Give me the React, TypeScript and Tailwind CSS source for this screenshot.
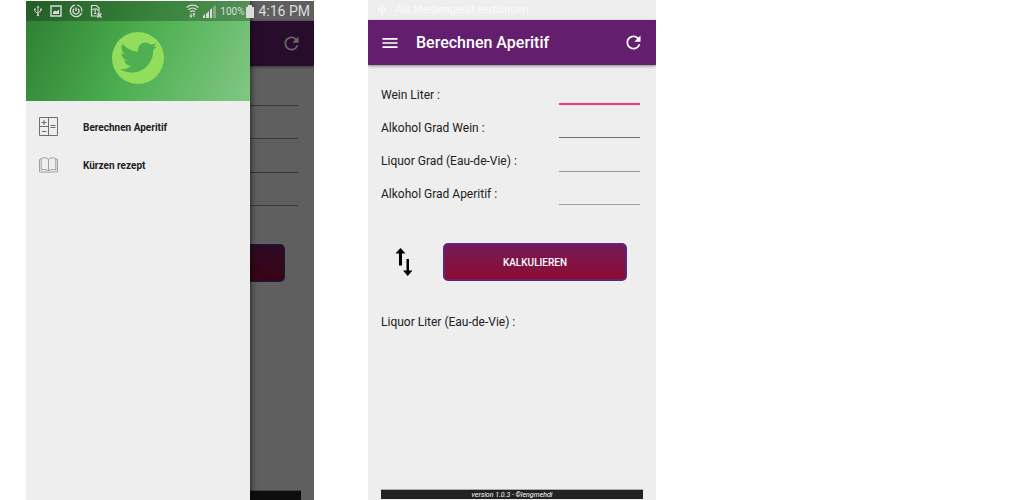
import React from "react";
import { FaTwitter } from "react-icons/fa";
import { MdRefresh, MdMenu } from "react-icons/md";

const fields = [
  { id: "wine", label: "Wein Liter :", line: "border-b-2 border-[#ff3377]" },
  { id: "wine-grade", label: "Alkohol Grad Wein :", line: "border-b border-[#6f6f6f]" },
  { id: "liquor-grade", label: "Liquor Grad (Eau-de-Vie) :", line: "border-b border-[#9a9a9a]" },
  { id: "aperitif-grade", label: "Alkohol Grad Aperitif :", line: "border-b border-[#9f9f9f]" },
];

function UsbIcon({ className }: { className: string }) {
  return (
    <svg viewBox="0 0 10 12" className={className} fill="none" stroke="currentColor" aria-hidden="true">
      <path d="M5 2v8M2 4.5v2L5 8.5M8 4v2L5 7.8" strokeWidth=".9" />
      <path d="M5 .5 3.600 2.600h2.800zM1.200 3.500h1.600v1.600H1.200zM7.200 3.500h1.600v1.600H7.200z" fill="currentColor" stroke="none" />
      <circle cx="5" cy="10.2" r="1.100" fill="currentColor" stroke="none" />
    </svg>
  );
}

function SwapIcon() {
  return (
    <svg viewBox="0 0 18 30" className="h-[30px] w-[18px]" aria-hidden="true">
      <path d="M5.500 1 10.500 6.500H7V18.500H4V6.500H.5zM11.500 12h2.500v11.500h3.500L12.700 29 8 23.500h3.500z" fill="#000" />
    </svg>
  );
}

function PictureIcon() {
  return (
    <svg viewBox="0 0 12 12" className="size-3" aria-hidden="true">
      <path d="M1 1h10v10H1z" fill="none" stroke="currentColor" strokeWidth="1.4" />
      <path d="M3 9V7l2-1.500 1.500 1L9 4.500V9z" fill="currentColor" />
    </svg>
  );
}

function PowerRingIcon() {
  return (
    <svg viewBox="0 0 14 14" className="size-[14px]" fill="none" stroke="currentColor" aria-hidden="true">
      <path d="M5.800 1.200A5.800 5.800 0 1 0 12.500 9M8.200 1.200A5.800 5.800 0 0 1 12.800 7.500" strokeWidth="1.300" />
      <path d="M5 4.800a3 3 0 1 0 4 0M7 3.500v3.500" strokeWidth="1.400" />
    </svg>
  );
}

function SimIcon() {
  return (
    <svg viewBox="0 0 12 14" className="h-[14px] w-3" aria-hidden="true">
      <path d="M1.500 1.500h5l2.500 2.500v8h-7.500z" fill="none" stroke="currentColor" strokeWidth="1.200" />
      <path d="M3 5h4.500M5.200 5v4.500M4 9.500h2.500M3 5v1.500M7.500 5v1.500" stroke="currentColor" fill="none" />
      <path d="m7.500 9.500 4 4m0-4-4 4" stroke="currentColor" strokeWidth="1.300" />
    </svg>
  );
}

function WifiIcon() {
  return (
    <svg viewBox="0 0 13 14" className="h-[14px] w-[13px]" fill="none" stroke="currentColor" aria-hidden="true">
      <path d="M.7 3.500a8.500 8.500 0 0 1 11.600 0M2.500 5.700a6 6 0 0 1 8 0M4.300 7.800a3.400 3.400 0 0 1 4.400 0" strokeWidth="1.300" />
      <path d="M5 9.500v4M8 9v4" />
      <path d="m3.300 11.500 1.700 2.300 1.700-2.300zM6.500 10.800 8 8.800l1.500 2z" fill="currentColor" stroke="none" />
    </svg>
  );
}

function SignalIcon() {
  return (
    <svg viewBox="0 0 13 13" className="size-[13px]" fill="currentColor" aria-hidden="true">
      <path d="M0 13v-2l2-2v4zM3 13V9l3-3v7zM7 13V5l2-2v10z" />
      <path d="M10 13V2l3-2v13z" opacity=".4" />
    </svg>
  );
}

function BatteryIcon() {
  return (
    <svg viewBox="0 0 8 13" className="h-[13px] w-2" fill="currentColor" aria-hidden="true">
      <path d="M2 0h4v2h2v11H0V2h2z" />
    </svg>
  );
}

function CalculatorIcon() {
  return (
    <svg viewBox="0 0 20 20" className="size-5" fill="none" stroke="#6d6d6d" aria-hidden="true">
      <path d="M.5.5h18v18H.5zM9.500.5v18M.5 9.500h9M11.500 8.500h5M11.500 10.500h5M3 14.500h4.500M2.500 5.500h5M5 3v5" />
    </svg>
  );
}

function BookIcon() {
  return (
    <svg viewBox="0 0 20 16" className="h-4 w-5" fill="none" stroke="#8b8b8b" aria-hidden="true">
      <path d="M9.500 2.500C8 .5 4.500.2 2.500 1.500L.5 2.500v12.500H8l1.500.8 1.500-.8h7.500V2.500l-2-1C14.500.2 11 .5 9.500 2.500zM9.500 2.500V14M2.200 1.800v11.200c2.300-.8 5.800-.6 7.300 1 1.500-1.600 5-1.800 7.300-1V1.800" strokeWidth=".8" />
    </svg>
  );
}

function Calculator({ covered = false }: { covered?: boolean }) {
  return (
    <div inert={covered} className="flex flex-1 flex-col bg-[#eeeeee] text-[#212121]">
      <div className="flex h-5 items-center gap-2 pl-[9px] text-[11px] text-[#fafafa]">
        {!covered && (
          <>
            <UsbIcon className="h-3 w-[10px]" />
            <span>Als Mediengerät verbunden</span>
          </>
        )}
      </div>
      <header className="flex h-[45px] items-center bg-[#641e6e] px-3 text-white shadow-[0_1px_3px_rgba(0,0,0,0.45)]">
        {!covered && (
          <>
            <button aria-label="Menü" className="text-[20px]">
              <MdMenu />
            </button>
            <h1 className="ml-4 text-base font-medium">Berechnen Aperitif</h1>
          </>
        )}
        <button aria-label="Aktualisieren" className="ml-auto text-[21px]">
          <MdRefresh />
        </button>
      </header>
      <form className="flex flex-1 flex-col pl-[13px]" onSubmit={(e) => e.preventDefault()}>
        <div className="mt-[13px] grid h-[133px] grid-rows-4 pr-4">
          {fields.map((f) => (
            <div key={f.id} className="flex items-center justify-between">
              {!covered && (
                <label htmlFor={f.id} className="text-[12px]">
                  {f.label}
                </label>
              )}
              <input
                id={covered ? undefined : f.id}
                aria-label={covered ? f.label : undefined}
                inputMode="decimal"
                className={`ml-auto h-[21px] w-[81px] bg-transparent text-xs outline-none ${covered ? "border-b border-[#909090]" : f.line}`}
              />
            </div>
          ))}
        </div>
        <div className="mt-8 flex items-center gap-[30px] pr-[29px] pl-[14px]">
          <button type="button" aria-label="Tauschen">
            <SwapIcon />
          </button>
          <button
            type="submit"
            className="h-[38px] flex-1 rounded-[5px] border-2 border-[#5b2878] bg-linear-to-b from-[#751759] to-[#8c0830] text-[10px] font-medium text-white"
          >
            {!covered && "KALKULIEREN"}
          </button>
        </div>
        {!covered && <output className="mt-8 text-[12px]">Liquor Liter (Eau-de-Vie) :</output>}
      </form>
      <footer className="mr-[13px] ml-[13px] h-[10px] border-t border-[#aaaaaa] bg-[#222222] text-center text-[7px] leading-[10px] text-white italic">
        {!covered && "version 1.0.3 - ©lengmehdi"}
      </footer>
    </div>
  );
}

function Drawer() {
  return (
    <nav className="absolute inset-y-0 left-0 w-[224px] bg-[#eeeeee] text-[10px] font-bold text-[#212121] shadow-[1px_0_6px_rgba(0,0,0,0.6)]">
      <div className="flex h-[100px] items-center justify-center bg-[linear-gradient(115deg,#2e7d32,#4caf50_50%,#81c784)] pt-[13px]">
        <div className="flex size-[52px] items-center justify-center rounded-full bg-[#92dd5c] text-[37px] text-[#4fb052]">
          <FaTwitter />
        </div>
      </div>
      <ul className="pt-[7px]">
        <li>
          <a href="#berechnen" className="flex h-[38px] items-center gap-6 pl-[13px]">
            <CalculatorIcon />
            Berechnen Aperitif
          </a>
        </li>
        <li>
          <a href="#rezept" className="flex h-[38px] items-center gap-6 pl-[13px]">
            <BookIcon />
            Kürzen rezept
          </a>
        </li>
      </ul>
    </nav>
  );
}

function StatusBar() {
  return (
    <div className="absolute inset-x-0 top-0 flex h-5 items-center pr-1 pl-[7px] text-[#dcdcdc]">
      <div className="absolute inset-y-0 left-0 w-[224px] bg-black/25" />
      <div className="relative flex flex-1 items-center gap-[7px]">
        <UsbIcon className="h-3 w-[10px]" />
        <PictureIcon />
        <PowerRingIcon />
        <SimIcon />
        <div className="ml-auto flex items-center gap-1">
          <WifiIcon />
          <SignalIcon />
          <div className="flex items-center gap-0.5">
            <span className="text-[10px]">100%</span>
            <BatteryIcon />
          </div>
          <span className="text-[14px]">4:16 PM</span>
        </div>
      </div>
    </div>
  );
}

export default function App() {
  return (
    <main className="flex h-screen gap-[54px] overflow-hidden bg-white pl-[26px] font-['Roboto',sans-serif]">
      <section className="relative mt-px flex w-72 flex-col overflow-hidden">
        <Calculator covered />
        <div className="absolute inset-0 bg-black/60" />
        <Drawer />
        <StatusBar />
      </section>
      <section className="flex w-72 flex-col overflow-hidden bg-[#eeeeee] pb-px">
        <Calculator />
      </section>
    </main>
  );
}
